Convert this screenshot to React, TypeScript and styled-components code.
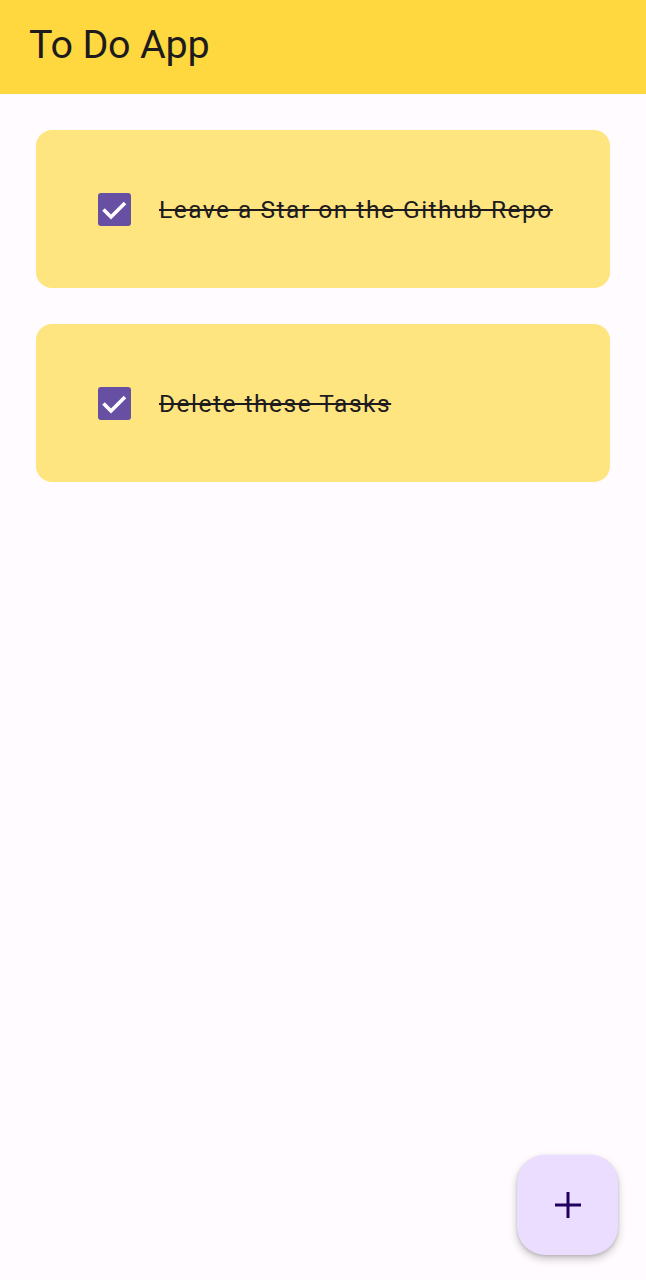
import React from "react";
import styled, { createGlobalStyle } from "styled-components";

const Global = createGlobalStyle`
  html, body { margin: 0; padding: 0; background: #FFFBFE; }
  body { font-family: Roboto, "Noto Sans", sans-serif; }
  * { box-sizing: border-box; }
`;

const Page = styled.div`
  min-height: 1280px;
  background: #FFFBFE;
  position: relative;
`;

const AppBar = styled.header`
  height: 94px;
  background: #FFD83F;
  display: flex;
  align-items: center;
  padding-left: 29px;
`;

const Title = styled.h1`
  margin: 0;
  font-family: Roboto, sans-serif;
  font-weight: 400;
  font-size: 39.5px;
  color: #1D1B1E;
  letter-spacing: -0.2px;
  line-height: 1;
  margin-top: -4px;
`;

const List = styled.main`
  display: flex;
  flex-direction: column;
  gap: 36px;
  padding: 36px 36px 0 36px;
`;

const Card = styled.div`
  height: 158px;
  background: #FEE580;
  border-radius: 16px;
  display: flex;
  align-items: center;
  padding-left: 62px;
  gap: 28px;
`;

const Box = styled.span<{ $checked: boolean }>`
  width: 33px;
  height: 33px;
  border-radius: 3px;
  background: ${(p) => (p.$checked ? "#6750A4" : "transparent")};
  display: flex;
  align-items: center;
  justify-content: center;
  flex-shrink: 0;
`;

const Label = styled.span<{ $done: boolean }>`
  font-family: Roboto, sans-serif;
  font-size: 24.5px;
  letter-spacing: 1.5px;
  color: #1D1B1E;
  text-decoration: ${(p) => (p.$done ? "line-through" : "none")};
  text-decoration-thickness: 2px;
`;

const Fab = styled.button`
  position: absolute;
  right: 28px;
  top: 1155px;
  width: 101px;
  height: 100px;
  border: none;
  border-radius: 28px;
  background: #EADDFF;
  box-shadow: 0 4px 8px rgba(0, 0, 0, 0.22), 0 1px 3px rgba(0, 0, 0, 0.15);
  display: flex;
  align-items: center;
  justify-content: center;
  padding: 0;
`;

const tasks = [
  { text: "Leave a Star on the Github Repo", done: true },
  { text: "Delete these Tasks", done: true },
];

export default function App() {
  return (
    <Page>
      <Global />
      <AppBar>
        <Title>To Do App</Title>
      </AppBar>
      <List>
        {tasks.map((t) => (
          <Card key={t.text}>
            <Box $checked={t.done}>
              <svg width="33" height="33" viewBox="0 0 33 33">
                <path d="M5.5 16.5 L13 24 L27 10" fill="none" stroke="#fff" strokeWidth="3.6" />
              </svg>
            </Box>
            <Label $done={t.done}>{t.text}</Label>
          </Card>
        ))}
      </List>
      <Fab aria-label="Add">
        <svg width="30" height="30" viewBox="0 0 30 30">
          <path d="M15 2 V28 M2 15 H28" stroke="#21005D" strokeWidth="3" />
        </svg>
      </Fab>
    </Page>
  );
}
